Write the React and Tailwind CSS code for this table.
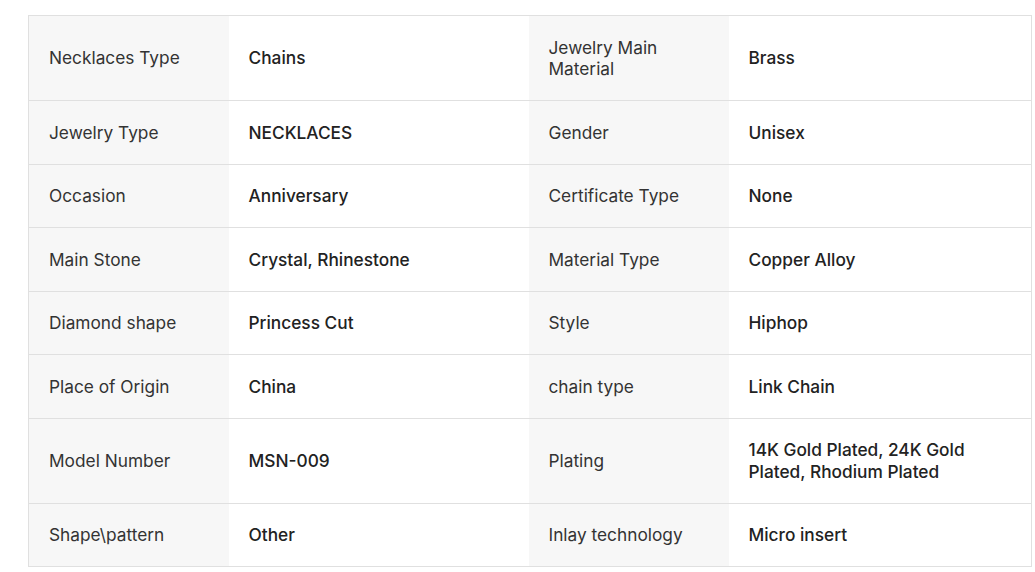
export default function App() {
  const rows = [
    ["Necklaces Type", "Chains", "Jewelry Main Material", "Brass"],
    ["Jewelry Type", "NECKLACES", "Gender", "Unisex"],
    ["Occasion", "Anniversary", "Certificate Type", "None"],
    ["Main Stone", "Crystal, Rhinestone", "Material Type", "Copper Alloy"],
    ["Diamond shape", "Princess Cut", "Style", "Hiphop"],
    ["Place of Origin", "China", "chain type", "Link Chain"],
    ["Model Number", "MSN-009", "Plating", "14K Gold Plated, 24K Gold Plated, Rhodium Plated"],
    ["Shape\\pattern", "Other", "Inlay technology", "Micro insert"],
  ];
  const label = "bg-[#f7f7f7] px-5 py-[20.5px] text-[17.3px] leading-[21.5px] text-[#333] font-normal align-middle text-left";
  const value = "bg-white px-5 py-[20.5px] text-[17.3px] leading-[21.5px] text-[#222] font-medium align-middle text-left";
  return (
    <div className="bg-white min-h-[572px] pl-[28px] pt-[15px]" style={{ fontFamily: "Inter, 'Noto Sans', sans-serif" }}>
      <table className="border-collapse table-fixed w-[1003px] border border-[#e0e0e0]">
        <colgroup>
          <col className="w-[200px]" />
          <col className="w-[300px]" />
          <col className="w-[200px]" />
          <col className="w-[303px]" />
        </colgroup>
        <tbody>
          {rows.map((r, i) => (
            <tr key={i} className="border-b border-[#e0e0e0]">
              <td className={label}>{r[0]}</td>
              <td className={value}>{r[1]}</td>
              <td className={label}>{r[2]}</td>
              <td className={value}>{r[3]}</td>
            </tr>
          ))}
        </tbody>
      </table>
    </div>
  );
}
